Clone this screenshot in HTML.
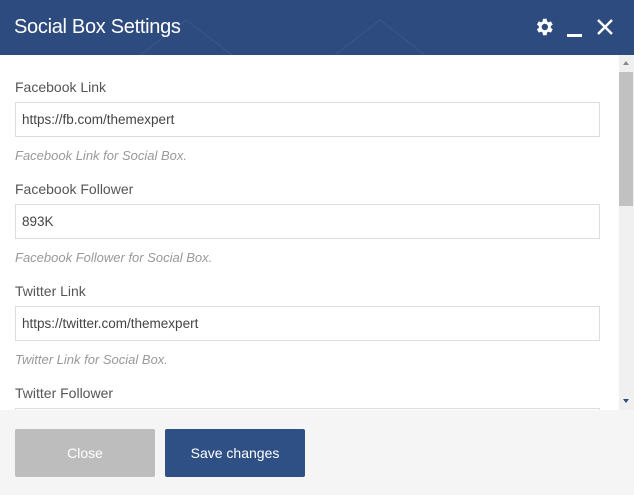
<!DOCTYPE html>
<html><head><style>
*{box-sizing:border-box;margin:0;padding:0}
body{width:634px;height:495px;overflow:hidden;font-family:"Liberation Sans",sans-serif;background:#fff;position:relative}
.hd{position:absolute;left:0;top:0;width:634px;height:55px;background:#2d4b7f;overflow:hidden}
.hd h1{position:absolute;left:14px;top:16px;font-size:20px;font-weight:normal;color:#fff;letter-spacing:-0.3px}
.body{position:absolute;left:0;top:55px;width:634px;height:355px;overflow:hidden}
.lbl{position:absolute;left:15px;font-size:14px;color:#555}
.inp{position:absolute;left:15px;width:585px;height:35px;border:1px solid #ddd;font-size:13.5px;color:#444;padding:9px 6px}
.help{position:absolute;left:15px;font-size:13px;font-style:italic;color:#999}
.sb{position:absolute;left:619px;top:55px;width:15px;height:355px;background:#f0f0f0}
.thumb{position:absolute;left:619px;top:72px;width:14px;height:134px;background:#c1c1c1}
.ft{position:absolute;left:0;top:410px;width:634px;height:85px;background:#f5f5f5}
.btn{position:absolute;top:429px;width:140px;height:48px;border-radius:2px;color:#fff;font-size:14px;text-align:center;line-height:48px}
</style></head><body>
<div class="hd">
<svg width="634" height="55" style="position:absolute;left:0;top:0"><polyline points="140,55 186,20 232,55" fill="none" stroke="#3a5890" stroke-width="1"/><polyline points="335,55 380,20 425,55" fill="none" stroke="#3a5890" stroke-width="1"/></svg>
<h1>Social Box Settings</h1>
<svg width="22" height="22" viewBox="0 0 24 24" style="position:absolute;left:533px;top:16px"><path fill="#fff" d="M19.4 13a7.5 7.5 0 000-2l2.1-1.6-2-3.5-2.5 1a7 7 0 00-1.7-1L14.9 3h-4l-.4 2.9a7 7 0 00-1.7 1l-2.5-1-2 3.5L6.4 11a7.5 7.5 0 000 2l-2.1 1.6 2 3.5 2.5-1a7 7 0 001.7 1l.4 2.9h4l.4-2.9a7 7 0 001.7-1l2.5 1 2-3.5zM12.9 15.5a3.5 3.5 0 110-7 3.5 3.5 0 010 7z"/></svg>
<div style="position:absolute;left:567px;top:34px;width:15px;height:2.5px;background:#fff"></div>
<svg width="16" height="16" style="position:absolute;left:597px;top:19px"><path d="M1 1L15 15M15 1L1 15" stroke="#fff" stroke-width="2.4"/></svg>
</div>
<div class="body"></div>
<div class="lbl" style="top:79px">Facebook Link</div>
<div class="inp" style="top:102px">https://fb.com/themexpert</div>
<div class="help" style="top:148px">Facebook Link for Social Box.</div>
<div class="lbl" style="top:181px">Facebook Follower</div>
<div class="inp" style="top:204px">893K</div>
<div class="help" style="top:250px">Facebook Follower for Social Box.</div>
<div class="lbl" style="top:283px">Twitter Link</div>
<div class="inp" style="top:306px">https://twitter.com/themexpert</div>
<div class="help" style="top:352px">Twitter Link for Social Box.</div>
<div class="lbl" style="top:385px">Twitter Follower</div>
<div class="inp" style="top:408px;height:10px"></div>
<div class="sb"></div><div class="thumb"></div>
<div style="position:absolute;left:623px;top:61px;width:0;height:0;border-left:3px solid transparent;border-right:3px solid transparent;border-bottom:4px solid #888"></div>
<div style="position:absolute;left:623px;top:399px;width:0;height:0;border-left:3px solid transparent;border-right:3px solid transparent;border-top:4px solid #2d4b7f"></div>
<div class="ft"></div>
<div class="btn" style="left:15px;background:#bdbdbd">Close</div>
<div class="btn" style="left:165px;background:#2f5085">Save changes</div>
</body></html>
